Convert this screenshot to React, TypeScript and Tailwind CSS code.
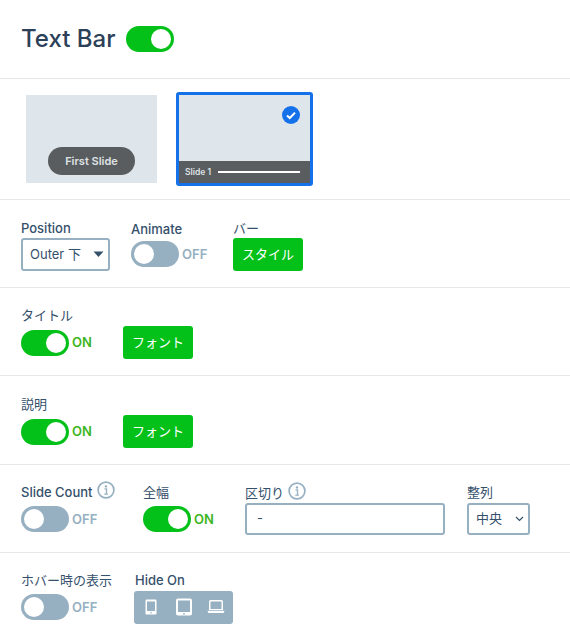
import React from "react";

function Toggle({ on, label = true }: { on: boolean; label?: boolean }) {
  return (
    <div className="flex items-center">
      <div className={`flex h-[26px] w-[48px] items-center rounded-full px-[3px] ${on ? "justify-end bg-[#04c11a]" : "justify-start bg-[#96b0c1]"}`}>
        <div className="h-[20px] w-[20px] rounded-full bg-white" />
      </div>
      {label && (
        <span className={`ml-[3px] pt-[1px] text-[13px] font-semibold ${on ? "text-[#3cb521]" : "text-[#96b0c1]"}`}>{on ? "ON" : "OFF"}</span>
      )}
    </div>
  );
}

function Label({ children }: { children: React.ReactNode }) {
  return <div className="h-[20px] text-[13px] leading-[20px] font-normal text-[#35506b]">{children}</div>;
}

function GreenBtn({ children }: { children: React.ReactNode }) {
  return (
    <div className="flex h-[33px] w-[70px] items-center justify-center rounded-[3px] bg-[#04c11a] text-[13px] text-white">{children}</div>
  );
}

function Info() {
  return (
    <svg width="18" height="18" viewBox="0 0 18 18" fill="none" className="mb-[4px] ml-[4px]">
      <circle cx="9" cy="9" r="7.9" stroke="#96b0c1" strokeWidth="1.7" />
      <circle cx="9" cy="5.4" r="1.2" fill="#96b0c1" />
      <path d="M7.5 7.8h2v5.2M7.3 13.2h3.6" stroke="#96b0c1" strokeWidth="1.3" />
    </svg>
  );
}

export default function App() {
  return (
    <div className="h-[636px] w-[570px] overflow-hidden bg-white [font-family:Inter,'Noto_Sans_CJK_JP',sans-serif]">
      <div className="flex h-[79px] items-center gap-[11px] border-b border-[#e4e8ea] pl-[21px]">
        <span className="text-[24px] leading-none font-medium text-[#2c4058]">Text Bar</span>
        <Toggle on label={false} />
      </div>

      <div className="flex h-[121px] items-center border-b border-[#e4e8ea] pb-[1px] pl-[26px]">
        <div className="relative flex h-[88px] w-[131px] items-end justify-center bg-[#dee6eb] pb-[8px]">
          <div className="flex h-[28px] w-[87px] items-center justify-center rounded-full bg-[#5a5d60] pt-[1px] text-[11px] font-semibold text-[#dfe3e5]">First Slide</div>
        </div>
        <div className="relative ml-[19px] flex h-[94px] w-[137px] flex-col justify-end rounded-[3px] border-[3px] border-[#1471ea] bg-[#dee6eb]">
          <svg width="18" height="18" viewBox="0 0 18 18" className="absolute top-[11px] right-[10px]">
            <circle cx="9" cy="9" r="9" fill="#1471ea" />
            <path d="M5 9.4l2.8 2.6L13 6.6" fill="none" stroke="#fff" strokeWidth="2" />
          </svg>
          <div className="flex h-[22px] items-center bg-[#5a5d60] pt-[1px] pl-[6px]">
            <span className="w-[33px] text-[8.5px] font-semibold text-[#dfe3e5]">Slide 1</span>
            <div className="h-[2px] w-[82px] bg-white" />
          </div>
        </div>
      </div>

      <div className="flex h-[88px] gap-[21px] border-b border-[#e4e8ea] pt-[18px] pl-[21px]">
        <div className="w-[89px]">
          <Label><span className="font-medium">Position</span></Label>
          <div className="flex h-[33px] w-[89px] items-center justify-between rounded-[3px] border-2 border-[#96b0c1] pr-[4px] pl-[7px] text-[13px] text-[#35506b]">
            <span>Outer 下</span>
            <svg width="11" height="7" viewBox="0 0 11 7"><path d="M0.5 0.5h10L5.5 6z" fill="#35506b" /></svg>
          </div>
        </div>
        <div className="w-[81px]">
          <div className="mt-[1px]"><Label><span className="font-medium">Animate</span></Label></div>
          <div className="mt-[2px]"><Toggle on={false} /></div>
        </div>
        <div>
          <Label>バー</Label>
          <GreenBtn>スタイル</GreenBtn>
        </div>
      </div>

      <div className="h-[88px] border-b border-[#e4e8ea] pt-[17px] pl-[21px]">
        <Label>タイトル</Label>
        <div className="mt-[1px] flex items-center gap-[30px]">
          <div className="w-[72px]"><Toggle on /></div>
          <GreenBtn>フォント</GreenBtn>
        </div>
      </div>

      <div className="h-[89px] border-b border-[#e4e8ea] pt-[18px] pl-[21px]">
        <Label>説明</Label>
        <div className="mt-[1px] flex items-center gap-[30px]">
          <div className="w-[72px]"><Toggle on /></div>
          <GreenBtn>フォント</GreenBtn>
        </div>
      </div>

      <div className="flex h-[88px] border-b border-[#e4e8ea] pt-[17px] pl-[21px]">
        <div className="w-[122px]">
          <div className="flex h-[20px] items-center"><Label><span className="font-medium">Slide Count</span></Label><Info /></div>
          <div className="mt-[4px]"><Toggle on={false} /></div>
        </div>
        <div className="w-[102px]">
          <Label>全幅</Label>
          <div className="mt-[4px]"><Toggle on /></div>
        </div>
        <div className="w-[222px]">
          <div className="flex h-[21px] items-center"><Label>区切り</Label><Info /></div>
          <div className="flex h-[32px] w-[200px] items-center rounded-[3px] border-2 border-[#96b0c1] pl-[10px] text-[13px] text-[#35506b]">-</div>
        </div>
        <div>
          <div className="flex h-[21px] items-center pb-[1px]"><Label>整列</Label></div>
          <div className="flex h-[32px] w-[63px] items-center justify-between rounded-[3px] border-2 border-[#96b0c1] pr-[4px] pl-[7px] text-[13px] text-[#35506b]">
            <span>中央</span>
            <svg width="9" height="6" viewBox="0 0 9 6"><path d="M1 1l3.5 3.5L8 1" fill="none" stroke="#35506b" strokeWidth="1.2" /></svg>
          </div>
        </div>
      </div>

      <div className="flex pt-[17px] pl-[21px]">
        <div className="w-[114px]">
          <Label>ホバー時の表示</Label>
          <div className="mt-[4px]"><Toggle on={false} /></div>
        </div>
        <div>
          <Label><span className="font-medium">Hide On</span></Label>
          <div className="mt-[1px] ml-[-1px] flex h-[33px] w-[99px] items-center gap-[15px] rounded-[3px] bg-[#96b0c1] pb-[1px] pl-[11px]">
            <svg width="12" height="16" viewBox="0 0 12 16"><rect x="0.5" y="0.5" width="11" height="15" rx="1.2" fill="#fff" /><rect x="2" y="2.5" width="8" height="9.5" fill="#96b0c1" /><circle cx="6" cy="13.8" r="0.8" fill="#96b0c1" /></svg>
            <svg width="16" height="18" viewBox="0 0 16 18" className="ml-[4px]"><rect x="0" y="0.5" width="16" height="17" rx="2" fill="#fff" /><rect x="2" y="2.5" width="12" height="11.5" fill="#96b0c1" /><circle cx="8" cy="15.8" r="0.9" fill="#96b0c1" /></svg>
            <svg width="18" height="16" viewBox="0 0 18 16"><path d="M2 2.5a1.5 1.5 0 0 1 1.5-1.5h11A1.5 1.5 0 0 1 16 2.5V11H2z" fill="#fff" /><rect x="3.5" y="2.5" width="11" height="7.5" fill="#96b0c1" /><path d="M0.5 11.8h17l-.6 1.6a1 1 0 0 1-1 .7H2.1a1 1 0 0 1-1-.7z" fill="#fff" /></svg>
          </div>
        </div>
      </div>
    </div>
  );
}
